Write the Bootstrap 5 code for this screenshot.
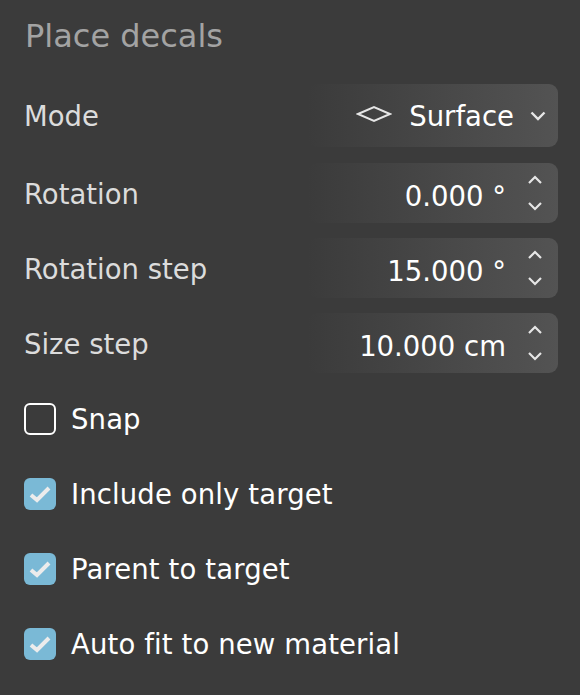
<!DOCTYPE html>
<html>

<head>
  <meta charset="utf-8">
  <meta name="viewport" content="width=device-width">
  <title>Place decals</title>
  <link href="https://cdn.jsdelivr.net/npm/bootstrap@5.3.2/dist/css/bootstrap.min.css" rel="stylesheet" type="text/css" />
  <script src="https://cdn.jsdelivr.net/npm/bootstrap@5.3.2/dist/js/bootstrap.bundle.min.js"></script>
  <style>
    body {
      background: #3b3b3b;
      color: #fff;
      font-family: "DejaVu Sans", sans-serif;
      font-size: 27.5px;
      overflow: hidden;
    }

    .panel {
      width: 580px;
      height: 695px;
      padding: 16px 22px 0 24px;
    }

    .panel-title {
      font-size: 32px;
      line-height: 40px;
      color: #a3a3a3;
      margin: 0 0 28px 1px;
      font-weight: 400;
    }

    .field-row {
      height: 60px;
      margin-bottom: 15px;
    }

    .field-row.tall {
      height: 63px;
      margin-bottom: 16px;
    }

    .field-label {
      color: #dcdcdc;
      line-height: 32px;
      padding-top: 2px;
    }

    .tall .field-label {
      padding-top: 0;
    }

    .field-box {
      width: 250px;
      height: 100%;
      border-radius: 9px;
      background: linear-gradient(90deg, #3b3b3b 0%, #535353 100%);
    }

    .field-value {
      padding-top: 5px;
      line-height: 32px;
    }

    .tall .field-value {
      padding-top: 0;
    }

    .diamond {
      margin: 0 17px 4px 0;
    }

    .arrows {
      width: 26px;
      margin: 0 10px 0 16px;
      gap: 18px;
    }

    .select-arrow {
      margin: 0 7px 0 11px;
    }

    .check-list {
      padding-top: 15px;
    }

    .check-row {
      height: 32px;
      margin-bottom: 43px;
      gap: 15px;
      line-height: 32px;
      letter-spacing: .12px;
    }

    .check-box {
      width: 32px;
      height: 32px;
      border-radius: 6px;
      border: 2px solid #fff;
      flex: none;
    }

    .check-box.on {
      background: #7ab9d6;
      border: 0;
    }
  </style>
</head>

<body>
  <div class="panel">
    <h1 class="panel-title">Place decals</h1>

    <div class="field-row tall d-flex justify-content-between align-items-center">
      <span class="field-label">Mode</span>
      <div class="field-box d-flex justify-content-end align-items-center">
        <svg class="diamond" width="36" height="18" viewBox="0 0 36 18">
          <path d="M2 9 18 2 34 9 18 16Z" fill="none" stroke="#e6e6e6" stroke-width="2" />
        </svg>
        <span class="field-value">Surface</span>
        <svg class="arrows select-arrow" width="16" height="10" viewBox="0 0 16 10">
          <path d="M1.5 1.5 8 8 14.5 1.5" fill="none" stroke="#e6e6e6" stroke-width="2.4" />
        </svg>
      </div>
    </div>

    <div class="field-row d-flex justify-content-between align-items-center">
      <span class="field-label">Rotation</span>
      <div class="field-box d-flex justify-content-end align-items-center">
        <span class="field-value">0.000 °</span>
        <div class="arrows d-flex flex-column align-items-center">
          <svg width="14" height="9" viewBox="0 0 14 9"><path d="M1 8 7 2 13 8" fill="none" stroke="#e6e6e6" stroke-width="2.2" /></svg>
          <svg width="14" height="9" viewBox="0 0 14 9"><path d="M1 1 7 7 13 1" fill="none" stroke="#e6e6e6" stroke-width="2.2" /></svg>
        </div>
      </div>
    </div>

    <div class="field-row d-flex justify-content-between align-items-center">
      <span class="field-label">Rotation step</span>
      <div class="field-box d-flex justify-content-end align-items-center">
        <span class="field-value">15.000 °</span>
        <div class="arrows d-flex flex-column align-items-center">
          <svg width="14" height="9" viewBox="0 0 14 9"><path d="M1 8 7 2 13 8" fill="none" stroke="#e6e6e6" stroke-width="2.2" /></svg>
          <svg width="14" height="9" viewBox="0 0 14 9"><path d="M1 1 7 7 13 1" fill="none" stroke="#e6e6e6" stroke-width="2.2" /></svg>
        </div>
      </div>
    </div>

    <div class="field-row d-flex justify-content-between align-items-center">
      <span class="field-label">Size step</span>
      <div class="field-box d-flex justify-content-end align-items-center">
        <span class="field-value">10.000 cm</span>
        <div class="arrows d-flex flex-column align-items-center">
          <svg width="14" height="9" viewBox="0 0 14 9"><path d="M1 8 7 2 13 8" fill="none" stroke="#e6e6e6" stroke-width="2.2" /></svg>
          <svg width="14" height="9" viewBox="0 0 14 9"><path d="M1 1 7 7 13 1" fill="none" stroke="#e6e6e6" stroke-width="2.2" /></svg>
        </div>
      </div>
    </div>

    <div class="check-list">
      <div class="check-row d-flex align-items-center">
        <span class="check-box"></span>
        <span>Snap</span>
      </div>
      <div class="check-row d-flex align-items-center">
        <span class="check-box on d-flex align-items-center justify-content-center">
          <svg width="24" height="20" viewBox="0 0 24 20"><path d="M3 11 9 16 21 4" fill="none" stroke="#ececec" stroke-width="4" /></svg>
        </span>
        <span>Include only target</span>
      </div>
      <div class="check-row d-flex align-items-center">
        <span class="check-box on d-flex align-items-center justify-content-center">
          <svg width="24" height="20" viewBox="0 0 24 20"><path d="M3 11 9 16 21 4" fill="none" stroke="#ececec" stroke-width="4" /></svg>
        </span>
        <span>Parent to target</span>
      </div>
      <div class="check-row d-flex align-items-center">
        <span class="check-box on d-flex align-items-center justify-content-center">
          <svg width="24" height="20" viewBox="0 0 24 20"><path d="M3 11 9 16 21 4" fill="none" stroke="#ececec" stroke-width="4" /></svg>
        </span>
        <span>Auto fit to new material</span>
      </div>
    </div>
  </div>
</body>

</html>
